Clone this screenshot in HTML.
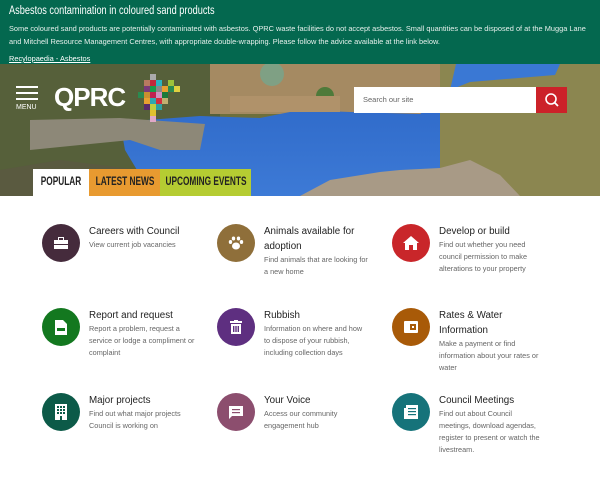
<!DOCTYPE html>
<html><head><meta charset="utf-8"><style>
*{margin:0;padding:0;box-sizing:border-box}
body{width:600px;height:480px;overflow:hidden;background:#fff;font-family:"Liberation Sans",sans-serif}
.ban{position:absolute;left:0;top:0;width:600px;height:64px;background:#04684f;color:#fff;padding:5px 9px}
.ban h1{font-weight:normal;font-size:11.5px;transform:scaleX(.8);transform-origin:left;white-space:nowrap;margin-bottom:4px;height:14px}
.ban p{font-size:7.4px;line-height:12.5px;color:#e6f0ec;width:585px}
.ban a{color:#fff;text-decoration:underline;font-size:7.4px;line-height:11px}
.hero{position:absolute;left:0;top:64px;width:600px;height:132px;overflow:hidden}
.tabs{position:absolute;top:169px;left:33px;height:27px;display:flex}
.tabs div{height:27px;position:relative;overflow:hidden}
.tabs span{position:absolute;left:50%;top:0;font-size:11.5px;font-weight:bold;color:#222;line-height:27px;white-space:nowrap;transform:translateX(-50%) scaleX(.72)}
.ic{position:absolute;width:38px;height:38px;border-radius:50%;display:flex;align-items:center;justify-content:center}
.item{position:absolute;width:106px}
.item h3{font-weight:normal;font-size:9.8px;line-height:15px;color:#222;margin-top:1px;width:104px}
.item p{font-size:7.3px;line-height:12px;color:#666}
</style></head><body>
<div class="ban">
<h1>Asbestos contamination in coloured sand products</h1>
<p>Some coloured sand products are potentially contaminated with asbestos. QPRC waste facilities do not accept asbestos. Small quantities can be disposed of at the Mugga Lane and Mitchell Resource Management Centres, with appropriate double-wrapping. Please follow the advice available at the link below.</p>
<a>Recylopaedia - Asbestos</a>
</div>
<div class="hero">
<svg width="600" height="132" viewBox="0 64 600 132">
<defs><linearGradient id="w" x1="0" y1="0" x2="0" y2="1"><stop offset="0" stop-color="#2a64c4"/><stop offset="1" stop-color="#3d7ad6"/></linearGradient></defs>
<rect x="0" y="64" width="600" height="132" fill="#6d6f3c"/>
<rect x="0" y="64" width="220" height="132" fill="#56603a"/>
<rect x="210" y="64" width="260" height="50" fill="#a58a62"/>
<polygon points="120,122 200,116 260,118 300,110 350,112 420,114 440,100 455,64 560,64 560,72 470,82 445,120 440,170 400,190 300,196 160,196 140,175 125,150" fill="url(#w)"/>
<rect x="440" y="64" width="160" height="132" fill="#8b8650"/>
<polygon points="456,64 560,64 555,75 470,82 450,90" fill="#3a78d4"/>
<polygon points="30,120 120,118 205,124 200,150 160,150 130,140 80,145 30,150" fill="#8d8878"/>
<polygon points="300,196 330,180 380,172 400,170 440,168 470,160 500,175 520,196" fill="#a89a86"/>
<polygon points="60,160 140,170 150,196 0,196 0,170" fill="#5a5a40"/>
<circle cx="272" cy="74" r="12" fill="#7fa084"/><circle cx="325" cy="96" r="9" fill="#4e7a3a"/>
<rect x="230" y="96" width="110" height="16" fill="#b0926a"/>
</svg>
<div style="position:absolute;left:16px;top:22px;width:22px;height:14px">
<div style="height:2px;background:#fff;margin-bottom:4px"></div><div style="height:2px;background:#fff;margin-bottom:4px"></div><div style="height:2px;background:#fff"></div></div>
<div style="position:absolute;left:16px;top:40px;font-size:7px;color:#fff">MENU</div>
<div style="position:absolute;left:54px;top:18px;font-weight:bold;font-size:26px;color:#fff;letter-spacing:-1px">QPRC</div>
<svg style="position:absolute;left:138px;top:10px" width="42" height="48">
<rect x="12" y="0" width="6" height="6" fill="#aaa"/>
<rect x="6" y="6" width="6" height="6" fill="#b87a60"/><rect x="12" y="6" width="6" height="6" fill="#c0283a"/><rect x="18" y="6" width="6" height="6" fill="#2bb3c0"/><rect x="30" y="6" width="6" height="6" fill="#9dc23a"/>
<rect x="6" y="12" width="6" height="6" fill="#7a3a7a"/><rect x="12" y="12" width="6" height="6" fill="#1a9a4a"/><rect x="18" y="12" width="6" height="6" fill="#888"/><rect x="24" y="12" width="6" height="6" fill="#e8a030"/><rect x="30" y="12" width="6" height="6" fill="#2a8a50"/><rect x="36" y="12" width="6" height="6" fill="#e0d040"/>
<rect x="0" y="18" width="6" height="6" fill="#2a8a50"/><rect x="6" y="18" width="6" height="6" fill="#c89030"/><rect x="12" y="18" width="6" height="6" fill="#c02050"/><rect x="18" y="18" width="6" height="6" fill="#d090c0"/><rect x="24" y="18" width="6" height="6" fill="#1a7a3a"/>
<rect x="6" y="24" width="6" height="6" fill="#e8a030"/><rect x="12" y="24" width="6" height="6" fill="#30a8b0"/><rect x="18" y="24" width="6" height="6" fill="#d03040"/><rect x="24" y="24" width="6" height="6" fill="#c0b070"/>
<rect x="6" y="30" width="6" height="6" fill="#5a2a6a"/><rect x="12" y="30" width="6" height="6" fill="#c0d040"/><rect x="18" y="30" width="6" height="6" fill="#30a0a0"/>
<rect x="12" y="36" width="6" height="6" fill="#e0c030"/><rect x="12" y="42" width="6" height="6" fill="#e0a8c8"/>
</svg>
<div style="position:absolute;left:354px;top:23px;width:182px;height:26px;background:#fff;font-size:7.5px;color:#666;line-height:26px;padding-left:9px">Search our site</div>
<div style="position:absolute;left:536px;top:23px;width:31px;height:26px;background:#cc2229">
<svg width="31" height="26"><circle cx="15" cy="12" r="5" fill="none" stroke="#fff" stroke-width="1.6"/><line x1="18.5" y1="15.5" x2="22" y2="19" stroke="#fff" stroke-width="1.8"/></svg></div>
</div>
<div class="tabs"><div style="width:56px;background:#fff"><span>POPULAR</span></div><div style="width:71px;background:#e89a30"><span>LATEST NEWS</span></div><div style="width:91px;background:#b5cc32"><span>UPCOMING EVENTS</span></div></div>

<div class="ic" style="left:42px;top:224px;background:#452b3c"><svg width="14" height="12"><rect x="0" y="3" width="14" height="9" fill="#fff"/><rect x="4.5" y="0.5" width="5" height="3" fill="none" stroke="#fff"/><rect x="0" y="7" width="14" height="1" fill="#452b3c"/></svg></div>
<div class="item" style="left:89px;top:223px"><h3>Careers with Council</h3><p>View current job vacancies</p></div>
<div class="ic" style="left:217px;top:224px;background:#8f6f3a"><svg width="16" height="14"><ellipse cx="8" cy="10" rx="4" ry="3.5" fill="#fff"/><ellipse cx="2.5" cy="6" rx="1.7" ry="2" fill="#fff"/><ellipse cx="13.5" cy="6" rx="1.7" ry="2" fill="#fff"/><ellipse cx="5.5" cy="2.5" rx="1.7" ry="2" fill="#fff"/><ellipse cx="10.5" cy="2.5" rx="1.7" ry="2" fill="#fff"/></svg></div>
<div class="item" style="left:264px;top:223px"><h3>Animals available for adoption</h3><p>Find animals that are looking for a new home</p></div>
<div class="ic" style="left:392px;top:224px;background:#c9262a"><svg width="16" height="14"><polygon points="8,0 16,7 14,7 14,14 10,14 10,9 6,9 6,14 2,14 2,7 0,7" fill="#fff"/></svg></div>
<div class="item" style="left:439px;top:223px"><h3>Develop or build</h3><p>Find out whether you need council permission to make alterations to your property</p></div>

<div class="ic" style="left:42px;top:308px;background:#13781f"><svg width="12" height="15"><polygon points="0,0 8,0 12,4 12,15 0,15" fill="#fff"/><rect x="2" y="8" width="8" height="3" fill="#13781f"/></svg></div>
<div class="item" style="left:89px;top:307px"><h3>Report and request</h3><p>Report a problem, request a service or lodge a compliment or complaint</p></div>
<div class="ic" style="left:217px;top:308px;background:#5e2f80"><svg width="12" height="14"><rect x="0" y="1" width="12" height="2" fill="#fff"/><rect x="4" y="0" width="4" height="2" fill="#fff"/><rect x="1" y="4" width="10" height="10" fill="#fff"/><rect x="3" y="6" width="1.4" height="6" fill="#5e2f80"/><rect x="5.3" y="6" width="1.4" height="6" fill="#5e2f80"/><rect x="7.6" y="6" width="1.4" height="6" fill="#5e2f80"/></svg></div>
<div class="item" style="left:264px;top:307px"><h3>Rubbish</h3><p>Information on where and how to dispose of your rubbish, including collection days</p></div>
<div class="ic" style="left:392px;top:308px;background:#a85a08"><svg width="14" height="12"><rect x="0" y="0" width="14" height="12" rx="1" fill="#fff"/><rect x="6" y="3" width="6" height="6" fill="#a85a08"/><rect x="8" y="5" width="2" height="2" fill="#fff"/></svg></div>
<div class="item" style="left:439px;top:307px"><h3>Rates &amp; Water Information</h3><p>Make a payment or find information about your rates or water</p></div>

<div class="ic" style="left:42px;top:393px;background:#0c5a48"><svg width="12" height="16"><rect x="0" y="0" width="12" height="16" fill="#fff"/><g fill="#0c5a48"><rect x="2" y="2" width="2" height="2"/><rect x="5" y="2" width="2" height="2"/><rect x="8" y="2" width="2" height="2"/><rect x="2" y="5" width="2" height="2"/><rect x="5" y="5" width="2" height="2"/><rect x="8" y="5" width="2" height="2"/><rect x="2" y="8" width="2" height="2"/><rect x="5" y="8" width="2" height="2"/><rect x="8" y="8" width="2" height="2"/><rect x="5" y="12" width="2" height="4"/></g></svg></div>
<div class="item" style="left:89px;top:392px"><h3>Major projects</h3><p>Find out what major projects Council is working on</p></div>
<div class="ic" style="left:217px;top:393px;background:#8c4e6e"><svg width="14" height="13"><polygon points="0,0 14,0 14,10 3,10 0,13" fill="#fff"/><rect x="3" y="3" width="8" height="1.2" fill="#8c4e6e"/><rect x="3" y="6" width="8" height="1.2" fill="#8c4e6e"/></svg></div>
<div class="item" style="left:264px;top:392px"><h3>Your Voice</h3><p>Access our community engagement hub</p></div>
<div class="ic" style="left:392px;top:393px;background:#16737a"><svg width="14" height="14"><rect x="2" y="0" width="12" height="14" fill="#fff"/><rect x="0" y="3" width="2" height="11" fill="#fff"/><g fill="#16737a"><rect x="4" y="3" width="8" height="1.2"/><rect x="4" y="6" width="8" height="1.2"/><rect x="4" y="9" width="8" height="1.2"/></g></svg></div>
<div class="item" style="left:439px;top:392px"><h3>Council Meetings</h3><p>Find out about Council meetings, download agendas, register to present or watch the livestream.</p></div>
</body></html>
